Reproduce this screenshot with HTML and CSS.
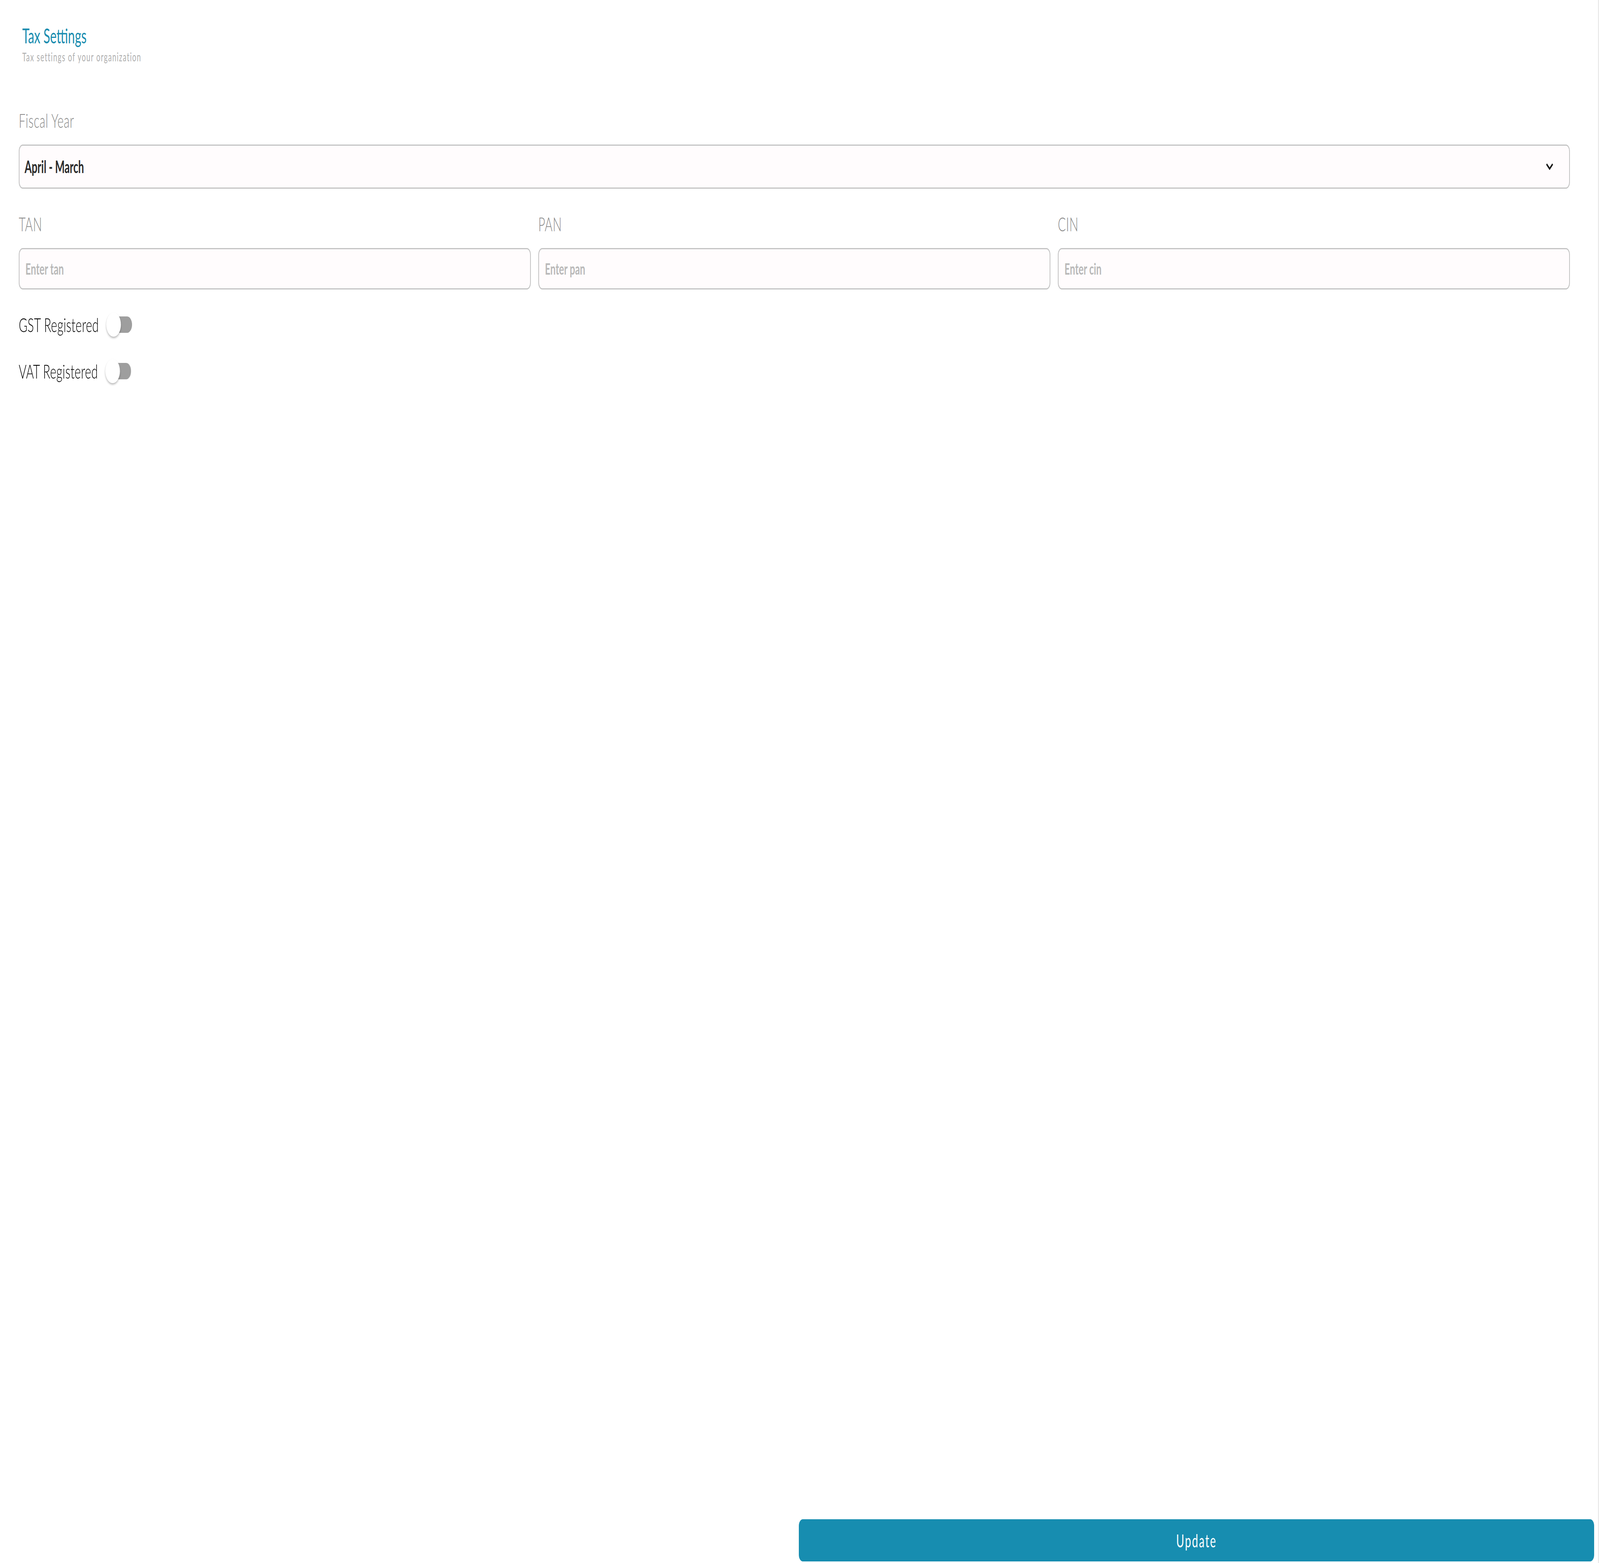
FILE: index.html
```html
<!DOCTYPE html>
<html lang="en">
<head>
<meta charset="utf-8">
<title>Tax Settings</title>
<link rel="stylesheet" href="styles.css">
</head>
<body>
<div class="page">
  <header class="head">
    <h1 class="title">Tax Settings</h1>
    <p class="subtitle">Tax settings of your organization</p>
  </header>

  <section class="form">
    <div class="field">
      <label class="label">Fiscal Year</label>
      <div class="select">
        <span class="select-value">April - March</span>
        <svg class="chevron" viewBox="0 0 30 18" width="18" height="18" preserveAspectRatio="none" aria-hidden="true">
          <path d="M2 2 L15 14 L28 2" fill="none" stroke="#111" stroke-width="5"/>
        </svg>
      </div>
    </div>

    <div class="row3">
      <div class="field">
        <label class="label">TAN</label>
        <div class="input"><span class="placeholder">Enter tan</span></div>
      </div>
      <div class="field">
        <label class="label">PAN</label>
        <div class="input"><span class="placeholder">Enter pan</span></div>
      </div>
      <div class="field">
        <label class="label">CIN</label>
        <div class="input"><span class="placeholder">Enter cin</span></div>
      </div>
    </div>

    <div class="toggle-row first">
      <span class="toggle-label">GST Registered</span>
      <span class="switch"><span class="track"></span><span class="thumb"></span></span>
    </div>
    <div class="toggle-row">
      <span class="toggle-label">VAT Registered</span>
      <span class="switch"><span class="track"></span><span class="thumb"></span></span>
    </div>
  </section>

  <div class="actions">
    <button class="update"><span class="update-text">Update</span></button>
  </div>
</div>
</body>
</html>
```

FILE: styles.css
```css
/* The reference canvas is 6765px wide, the browser viewport is narrower.
   Horizontal measures are taken from the reference and multiplied by
   0.605469 (viewport / reference); text blocks keep their reference
   metrics and are compressed horizontally by the same factor. */

html, body {
  margin: 0;
  padding: 0;
  background: #ffffff;
}

body {
  font-family: "Lato", "Noto Sans", sans-serif;
}

.page {
  box-sizing: border-box;
  height: 100vh;
  margin-right: 3px;
  border-right: 2px solid #e3e3e3;
  display: flex;
  flex-direction: column;
}

.head {
  padding: 60px 0 0 94px;
  transform: scaleX(0.605469);
  transform-origin: 0 0;
}

.title {
  margin: 0;
  font-size: 52px;
  line-height: 1.2;
  font-weight: 400;
  color: #1a8db0;
}

.subtitle {
  margin: 5px 0 0 0;
  font-size: 30px;
  line-height: 1.2;
  font-weight: 400;
  letter-spacing: 2.4px;
  color: #b0b0b0;
}

.form {
  padding: 115px 72px 0 48.4px;
}

.field {
  display: flex;
  flex-direction: column;
}

.label {
  font-size: 50px;
  line-height: 1.2;
  font-weight: 300;
  letter-spacing: 1px;
  color: #8a8a8a;
  margin-bottom: 32px;
  transform: scaleX(0.605469);
  transform-origin: 0 0;
}

.select {
  box-sizing: border-box;
  height: 113px;
  border-style: solid;
  border-color: #c4c4c4;
  border-width: 3px 2px;
  border-radius: 10.3px / 17px;
  background: #fffcfd;
  display: flex;
  align-items: center;
  justify-content: space-between;
  padding: 0 41px 0 13px;
}

.select-value {
  display: inline-block;
  font-size: 43px;
  line-height: 1.2;
  font-weight: 700;
  color: #2a2a2a;
  transform: scaleX(0.605469);
  transform-origin: 0 50%;
}

.chevron {
  display: block;
  flex: none;
}

.row3 {
  margin-top: 60px;
  display: grid;
  grid-template-columns: 1fr 1fr 1fr;
  column-gap: 18.8px;
}

.input {
  box-sizing: border-box;
  height: 106px;
  border-style: solid;
  border-color: #c4c4c4;
  border-width: 3px 2px;
  border-radius: 10.3px / 17px;
  background: #fffcfd;
  display: flex;
  align-items: center;
  padding: 0 15px;
}

.placeholder {
  display: inline-block;
  font-size: 40px;
  line-height: 1.2;
  font-weight: 700;
  color: #b9b9b9;
  transform: scaleX(0.605469);
  transform-origin: 0 50%;
}

.toggle-row {
  display: flex;
  align-items: center;
  height: 62px;
  margin-top: 57px;
  transform: scaleX(0.605469);
  transform-origin: 0 50%;
}

.toggle-row.first {
  margin-top: 59px;
}

.toggle-label {
  font-size: 50px;
  line-height: 1.2;
  font-weight: 300;
  letter-spacing: 0.6px;
  color: #000000;
  margin-right: 31px;
}

.switch {
  position: relative;
  display: inline-block;
  width: 109px;
  height: 62px;
}

.track {
  position: absolute;
  left: 13px;
  top: 10px;
  width: 96px;
  height: 42px;
  border-radius: 21px;
  background: #9e9e9e;
}

.thumb {
  position: absolute;
  left: 0;
  top: 0;
  width: 62px;
  height: 62px;
  border-radius: 50%;
  background: #ffffff;
  box-shadow: 0 4px 6px rgba(0, 0, 0, 0.22), 0 1px 3px rgba(0, 0, 0, 0.12);
}

.actions {
  margin-top: auto;
  display: flex;
  justify-content: flex-end;
  padding: 0 9.6px 4px 0;
}

.update {
  width: 2036px;
  height: 108px;
  border: none;
  border-radius: 10.3px / 17px;
  background: #178db0;
  color: #ffffff;
  font-family: "Lato", "Noto Sans", sans-serif;
  font-size: 46px;
  font-weight: 400;
  padding: 0;
}

.update-text {
  display: inline-block;
  letter-spacing: 4px;
  transform: scaleX(0.605469);
}
```
